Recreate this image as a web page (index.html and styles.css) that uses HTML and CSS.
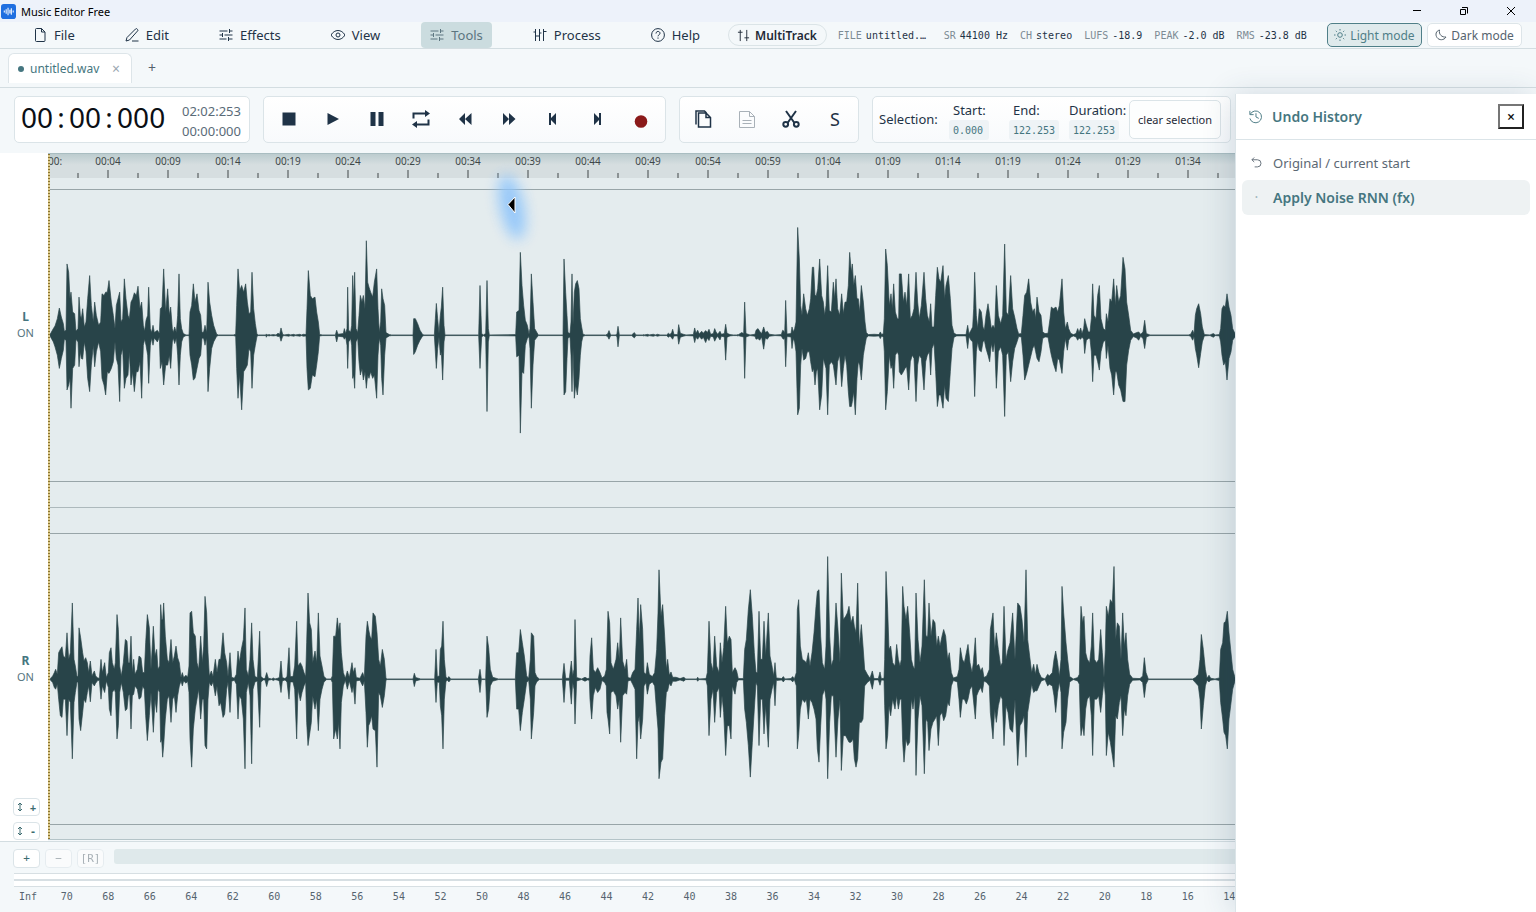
FILE: index.html
```html
<!DOCTYPE html>
<html lang="en">
<head>
<meta charset="utf-8">
<title>Music Editor Free</title>
<link rel="stylesheet" href="styles.css">
</head>
<body>
<div class="app">
  <header class="titlebar">
    <svg class="logo" viewBox="0 0 16 16"><rect width="16" height="16" rx="3" fill="#1f6fe0"/><path d="M3.500 7v2M5.500 5.500v5M7.500 4v8M9.500 6v4M11 4.500v7M13 7v2" stroke="#fff" stroke-width="1.100"/></svg>
    <span class="app-name">Music Editor Free</span>
    <div class="window-controls">
      <button aria-label="Minimize"><svg viewBox="0 0 10 10"><path d="M1 4.500h8"/></svg></button>
      <button aria-label="Restore"><svg viewBox="0 0 10 10"><path d="M1.500 8.500V3.500h5v5zM3 1.500h5.500v6"/></svg></button>
      <button aria-label="Close"><svg viewBox="0 0 10 10"><path d="M1 1l8 8M9 1l-8 8"/></svg></button>
    </div>
  </header>

  <nav class="menubar">
    <div class="menu">
      <button class="menu-item"><svg viewBox="0 0 14 14"><path d="M2.500 1.500a1 1 0 0 1 1-1H8.500L12 4v8.500a1 1 0 0 1-1 1H3.500a1 1 0 0 1-1-1zM8.500.500V4H12"/></svg>File</button>
      <button class="menu-item"><svg viewBox="0 0 14 14"><path d="M1 13l1-3.500L10.500 1a1 1 0 0 1 1.600 0l.400.400a1 1 0 0 1 0 1.600L4.500 12zM7 13h6.500"/></svg>Edit</button>
      <button class="menu-item"><svg viewBox="0 0 14 14"><path d="M.500 3h8M10.500 3h3M.500 7h3M5.500 7h8M.500 11h7M9.500 11h4M10.500 1v4M3.500 5v4M9.500 9v4"/></svg>Effects</button>
      <button class="menu-item"><svg viewBox="0 0 14 14"><path d="M0 7c3.500-6 10.500-6 14 0-3.500 6-10.500 6-14 0z"/><circle cx="7" cy="7" r="2"/></svg>View</button>
      <button class="menu-item active"><svg viewBox="0 0 14 14"><path d="M.500 3h8M10.500 3h3M.500 7h3M5.500 7h8M.500 11h7M9.500 11h4M10.500 1v4M3.500 5v4M9.500 9v4"/></svg>Tools</button>
      <button class="menu-item"><svg viewBox="0 0 14 14"><path d="M2.500 1v12M6.500 1v12M10.500 1v12M2.500 8h4M6.500 5h2M10.500 3.500h3M.500 4h2"/></svg>Process</button>
      <button class="menu-item"><svg viewBox="0 0 14 14"><circle cx="7" cy="7" r="6.400"/><path d="M5 5.500c0-2.800 4-2.600 4-.200 0 1.500-2 1.500-2 3M7 9.500v1.200"/></svg>Help</button>
    </div>
    <button class="multitrack"><svg viewBox="0 0 14 14"><path d="M3.500 1v12M1 3.500h5M10.500 1v12M8 9.500h5"/></svg>MultiTrack</button>
    <dl class="status">
      <div class="status-file"><dt>FILE</dt><dd>untitled.…</dd></div>
      <div><dt>SR</dt><dd>44100 Hz</dd></div>
      <div><dt>CH</dt><dd>stereo</dd></div>
      <div><dt>LUFS</dt><dd>-18.9</dd></div>
      <div><dt>PEAK</dt><dd>-2.0 dB</dd></div>
      <div><dt>RMS</dt><dd>-23.8 dB</dd></div>
    </dl>
    <div class="modes">
      <button class="mode selected"><svg viewBox="0 0 12 12"><circle cx="6" cy="6" r="2.300"/><path d="M6 0v1.500M6 10.500V12M0 6h1.500M10.500 6H12M1.800 1.800l1 1M9.200 9.200l1 1M1.800 10.200l1-1M9.200 2.800l1-1"/></svg>Light mode</button>
      <button class="mode"><svg viewBox="0 0 12 12"><path d="M4.500 1C1 2 0 5.500 2 8.500s7 3 9-.500C7 8.500 3.500 5.500 4.500 1z"/></svg>Dark mode</button>
    </div>
  </nav>

  <div class="tabs">
    <div class="tab"><i class="dot"></i><span>untitled.wav</span><button class="tab-close" aria-label="Close tab">×</button></div>
    <button class="tab-add" aria-label="New tab">+</button>
  </div>

  <div class="body">
    <main class="editor">
      <div class="toolbar">
        <section class="card clock">
          <div class="clock-main"><span>00</span><b>:</b><span>00</span><b>:</b><span>000</span></div>
          <div class="clock-side"><span>02:02:253</span><span>00:00:000</span></div>
        </section>
        <section class="card transport">
          <button class="tool" aria-label="Stop"><svg viewBox="0 0 20 20"><path d="M3.500 3.500h13v13h-13z"/></svg></button>
          <button class="tool" aria-label="Play"><svg viewBox="0 0 20 20"><path d="M4.500 4l11.500 6-11.500 6z"/></svg></button>
          <button class="tool" aria-label="Pause"><svg viewBox="0 0 20 20"><path d="M3.500 3h5v14h-5zM11.500 3h5v14h-5z"/></svg></button>
          <button class="tool" aria-label="Loop"><svg viewBox="0 0 20 20"><path d="M2.500 9.500v-5h13M17.500 10.500v5h-13" fill="none" stroke="currentColor" stroke-width="2"/><path d="M14 1l5 3.500-5 3.500zM6 12l-5 3.500L6 19z"/></svg></button>
          <button class="tool" aria-label="Rewind"><svg viewBox="0 0 20 20"><path d="M10 4v12L4 10zM16.500 4v12L10 10z"/></svg></button>
          <button class="tool" aria-label="Forward"><svg viewBox="0 0 20 20"><path d="M4 4v12l6-6zM10 4v12l6.500-6z"/></svg></button>
          <button class="tool" aria-label="To start"><svg viewBox="0 0 20 20"><path d="M6 4h2v5l5-5v12l-5-5v5H6z"/></svg></button>
          <button class="tool" aria-label="To end"><svg viewBox="0 0 20 20"><path d="M14 4h-2v5L7 4v12l5-5v5h2z"/></svg></button>
          <button class="tool" aria-label="Record"><svg viewBox="0 0 20 20"><circle cx="10" cy="12.500" r="6.300" fill="#8b1a1a"/></svg></button>
        </section>
        <section class="card clip">
          <button class="tool" aria-label="Copy"><svg class="line" viewBox="0 0 20 20"><path d="M5.500 4h7.500l4.500 4.500V18h-12zM13 4v4.500h4.500M3 15.500V2h8.500l2 2"/></svg></button>
          <button class="tool muted" aria-label="Paste"><svg class="thin" viewBox="0 0 20 20"><path d="M2.500 2.500h10l5 5v11h-15zM12.500 2.500v5h5M5.500 11.500h9M5.500 14.500h9"/></svg></button>
          <button class="tool" aria-label="Cut"><svg class="line bold" viewBox="0 0 20 20"><path d="M5 2l8.500 12M15 2L6.500 14"/><circle cx="4.700" cy="15.300" r="2.400"/><circle cx="15.300" cy="15.300" r="2.400"/></svg></button>
          <button class="tool letter">S</button>
        </section>
        <section class="card selection">
          <span class="selection-title">Selection:</span>
          <div class="field"><label for="start">Start:</label><input id="start" class="short" value="0.000"></div>
          <div class="field"><label for="end">End:</label><input id="end" value="122.253"></div>
          <div class="field"><label for="dur">Duration:</label><input id="dur" value="122.253"></div>
          <button class="clear">clear selection</button>
        </section>
      </div>

      <div class="stage">
        <aside class="channels">
          <div class="channel"><b>L</b><span>ON</span></div>
          <div class="channel"><b>R</b><span>ON</span></div>
          <div class="vzoom">
            <button aria-label="Zoom in vertically"><svg viewBox="0 0 6 10"><path d="M1 3l2-2 2 2M3 1v8M1 7l2 2 2-2"/></svg><b>+</b></button>
            <button aria-label="Zoom out vertically"><svg viewBox="0 0 6 10"><path d="M1 3l2-2 2 2M3 1v8M1 7l2 2 2-2"/></svg><b>-</b></button>
          </div>
        </aside>
        <div class="waves">
          <div class="ruler"><span class="first">00:</span><span>00:04</span><span>00:09</span><span>00:14</span><span>00:19</span><span>00:24</span><span>00:29</span><span>00:34</span><span>00:39</span><span>00:44</span><span>00:49</span><span>00:54</span><span>00:59</span><span>01:04</span><span>01:09</span><span>01:14</span><span>01:19</span><span>01:24</span><span>01:29</span><span>01:34</span></div>
          <div class="track left"><svg viewBox="0 -438 3561 876" preserveAspectRatio="none"><path id="wave-l"/></svg></div>
          <div class="track right"><svg viewBox="0 -438 3561 876" preserveAspectRatio="none"><path id="wave-r"/></svg></div>
          <div class="glow"></div>
          <svg class="pointer" viewBox="0 0 10 18"><path d="M8 1v16L1 8.500z" fill="#000" stroke="#fff"/></svg>
        </div>
      </div>

      <div class="zoombar">
        <button class="zoom">+</button>
        <button class="zoom" disabled>−</button>
        <button class="zoom reset" disabled>[R]</button>
        <div class="scroll"></div>
      </div>
      <div class="meter"><div class="meter-line"></div></div>
      <div class="scale"><span class="inf">Inf</span><div class="marks"><span>70</span><span>68</span><span>66</span><span>64</span><span>62</span><span>60</span><span>58</span><span>56</span><span>54</span><span>52</span><span>50</span><span>48</span><span>46</span><span>44</span><span>42</span><span>40</span><span>38</span><span>36</span><span>34</span><span>32</span><span>30</span><span>28</span><span>26</span><span>24</span><span>22</span><span>20</span><span>18</span><span>16</span><span>14</span></div></div>
    </main>

    <aside class="history">
      <header>
        <svg viewBox="0 0 16 16"><path d="M2 2v4h4M2.500 5.500a6.300 6.300 0 1 1-.500 4.500M8.500 4.500v4l3 1.500"/></svg>
        <h2>Undo History</h2>
        <button class="history-close" aria-label="Close">×</button>
      </header>
      <ul>
        <li><svg viewBox="0 0 12 12"><path d="M3.500.500L1 3l2.500 2.500M1 3h6a3.800 3.800 0 0 1 0 7.800H4"/></svg>Original / current start</li>
        <li class="current"><span class="bullet">·</span>Apply Noise RNN (fx)</li>
      </ul>
    </aside>
  </div>
</div>
<script src="waves.js"></script>
</body>
</html>
```
FILE: styles.css
```css
* { box-sizing: border-box; }
body { margin: 0; font-family: "Noto Sans", sans-serif; font-size: 13px; color: #1f3347; background: #f4f8fa; }
button { font: inherit; color: inherit; background: none; border: 0; padding: 0; margin: 0; }
svg { fill: none; stroke: currentColor; flex: none; }
.app { min-height: 100vh; display: flex; flex-direction: column; overflow: hidden; }

.titlebar { height: 22px; display: flex; align-items: center; gap: 5px; padding: 0 2px 0 1px; background: #edf2fa; color: #000; font-size: 11px; }
.logo { width: 15px; height: 15px; stroke: none; }
.window-controls { margin-left: auto; display: flex; }
.window-controls button { width: 47px; height: 20px; display: flex; align-items: center; justify-content: center; }
.window-controls svg { width: 10px; height: 10px; }

.menubar { height: 27px; display: flex; align-items: center; border-bottom: 1px solid #d3dde1; padding: 0 14px 0 24px; }
.menu { display: flex; gap: 32px; width: 704px; }
.menu-item { height: 26px; padding: 0 9px; display: flex; align-items: center; gap: 7px; border-radius: 4px; }
.menu-item svg { width: 14px; height: 14px; }
.menu-item.active { background: #cbdcdf; color: #5c7580; }
.multitrack { height: 22px; padding: 0 9px 0 8px; display: flex; align-items: center; gap: 5px; border: 1px solid #dbe4e7; border-radius: 11px; font-weight: 600; font-size: 12px; color: #1f2a37; }
.multitrack svg { width: 13px; height: 13px; }
.status { margin: 0 0 0 11px; display: flex; gap: 12px; font-family: "DejaVu Sans Mono", monospace; font-size: 10px; white-space: nowrap; }
.status div { display: flex; gap: 4px; }
.status-file { width: 94px; }
.status dt { color: #7d8b94; }
.status dd { margin: 0; color: #1f3347; }
.modes { margin-left: auto; display: flex; gap: 5px; }
.mode { height: 24px; width: 95px; display: flex; align-items: center; justify-content: center; gap: 4px; border: 1px solid #dde5e9; border-radius: 5px; background: #fff; color: #56646f; font-size: 12px; white-space: nowrap; }
.mode.selected { background: #dfeaec; border-color: #4f7f88; color: #4f7f88; }
.mode svg { width: 12px; height: 12px; }

.tabs { height: 39px; display: flex; align-items: flex-end; border-bottom: 1px solid #d3dde1; padding: 0 8px 4px; }
.tab { height: 30px; width: 124px; padding: 0 11px 0 9px; display: flex; align-items: center; background: #fff; border: 1px solid #dde5e9; border-bottom: 0; border-radius: 6px 6px 0 0; color: #457680; font-size: 12px; }
.dot { width: 6px; height: 6px; border-radius: 50%; background: #457680; margin-right: 6px; }
.tab-close { margin-left: auto; color: #9aa7b0; font-size: 14px; }
.tab-add { width: 40px; height: 32px; font-size: 14px; color: #54626d; }

.body { flex: 1; display: flex; }
.editor { flex: 1; min-width: 0; display: flex; flex-direction: column; }
.toolbar { display: flex; gap: 13px; padding: 8px 4px 10px 14px; }
.card { height: 47px; display: flex; align-items: center; border: 1px solid #dbe4e8; border-radius: 5px; background: linear-gradient(#fff, #f8fafc); }
.clock { width: 237px; padding: 0 8px 0 6px; justify-content: space-between; background: #fff; }
.clock-main { display: flex; font-size: 28px; line-height: 40px; padding-bottom: 5px; color: #0b0f14; }
.clock-main b { width: 16px; text-align: center; font-weight: 400; }
.clock-side { display: flex; flex-direction: column; font-size: 13px; line-height: 20px; color: #5a6b78; padding-top: 3px; }
.transport { padding: 0 2px 0 3px; }
.clip { padding: 0 1px; }
.tool { width: 44px; height: 44px; padding-bottom: 2px; display: flex; align-items: center; justify-content: center; color: #1f3347; }
.tool svg { width: 20px; height: 20px; fill: currentColor; stroke: none; }
.tool svg.line { fill: none; stroke: currentColor; stroke-width: 1.500; }
.tool svg.bold { stroke-width: 2; }
.tool svg.thin { fill: none; stroke: currentColor; stroke-width: 1; }
.muted { color: #a9b1b8; }
.letter { font-size: 18px; }
.selection { flex: 1; padding: 0 9px 0 6px; white-space: nowrap; }
.selection-title { width: 70px; padding-bottom: 2px; }
.field { width: 60px; display: flex; flex-direction: column; padding-top: 3px; }
.field label { line-height: 16px; padding-left: 4px; }
.field:nth-of-type(3) label { padding-left: 0; }
.field input { width: 50px; height: 20px; margin-top: 2px; padding: 0 4px; border: 0; border-radius: 3px; background: #eef3f6; color: #457680; font: 10px "DejaVu Sans Mono", monospace; }
.field input.short { width: 40px; }
.clear { margin-left: auto; width: 92px; height: 39px; border: 1px solid #dbe4e8; border-radius: 5px; font-size: 11px; color: #1f2a37; background: #fdfefe; }

.stage { flex: 1; display: flex; border-bottom: 1px solid #d3dde1; }
.channels { position: relative; width: 48px; background: #fff; display: flex; flex-direction: column; }
.channel { flex: 1; display: flex; flex-direction: column; align-items: center; justify-content: center; padding-left: 3px; color: #457680; line-height: 16px; font-size: 12px; }
.channel span { font-size: 11px; color: #567480; }
.vzoom { position: absolute; left: 13px; bottom: 1px; display: flex; flex-direction: column; gap: 6px; }
.vzoom button { width: 27px; height: 18px; padding: 0 3px; display: flex; align-items: center; justify-content: space-between; border: 1px solid #dbe4e8; border-radius: 4px; background: #fff; color: #3c6b70; font: 10px "DejaVu Sans Mono", monospace; }
.vzoom svg { width: 6px; height: 10px; }
.waves { position: relative; flex: 1; min-width: 0; overflow: hidden; display: flex; flex-direction: column; background: #e4ecee; border-top: 1px solid #a9bdc1; border-bottom: 1px solid #b4c4c8; margin-bottom: 1px; }
.waves::before { content: ""; position: absolute; z-index: 1; left: 0; top: 0; bottom: 0; width: 2px; background: repeating-linear-gradient(#8a7430 0 1px, #dcc98a 1px 3px); }
.ruler { position: relative; height: 24px; display: flex; font: 10px/15px "Noto Sans", sans-serif; color: #3f4849; background: linear-gradient(#bccccf, #d6dee0 45%); }
.ruler::before, .ruler::after { content: ""; position: absolute; left: 0; right: 0; bottom: 0; }
.ruler::before { height: 8px; background: repeating-linear-gradient(90deg, #8b9294 0 1px, transparent 1px 59px, #8b9294 59px 60px); }
.ruler::after { height: 5px; background: repeating-linear-gradient(90deg, #8b9294 0 1px, transparent 1px 29px, #8b9294 29px 30px); }
.ruler span { flex: none; width: 60px; text-align: center; }
.ruler .first { width: 30px; text-align: left; }
.track { flex: 1; display: flex; flex-direction: column; min-height: 200px; }
.track svg { flex: 1 0 auto; width: 100%; height: 0; border-top: 1px solid #98a5a8; border-bottom: 1px solid #98a5a8; fill: #284449; stroke: #284449; stroke-width: 2; }
.left { padding: 11px 0 25px; border-bottom: 1px solid #adb9bc; }
.right { padding: 25px 0 14px; }
.glow { position: absolute; left: 452px; top: 20px; width: 24px; height: 66px; border-radius: 50%; background: #8fc5fb; filter: blur(7px); transform: rotate(-12deg); opacity: .9; }
.pointer { position: absolute; left: 459px; top: 42px; width: 10px; height: 18px; }

.zoombar { height: 31px; display: flex; align-items: center; gap: 5px; padding-left: 13px; }
.zoom { width: 27px; height: 19px; margin-top: 2px; border: 1px solid #dbe4e8; border-radius: 4px; background: #fff; color: #3c6b70; font: 11px/15px "DejaVu Sans Mono", monospace; }
.zoom:disabled { opacity: .55; color: #6b7780; }
.scroll { flex: 1; height: 15px; margin: 0 0 3px 5px; border-radius: 3px 0 0 3px; background: #dfe9eb; }
.meter { margin-left: 14px; height: 14px; border-top: 1px solid #d7dfe3; border-bottom: 1px solid #d7dfe3; background: #fff; padding-top: 5px; }
.meter-line { height: 2px; background: #d7dfe3; }
.scale { height: 25px; display: flex; overflow: hidden; padding-left: 14px; font: 10px/20px "DejaVu Sans Mono", monospace; color: #56646f; }
.inf { width: 32px; padding-left: 5px; }
.marks { flex: 1; display: flex; margin-right: -15px; }
.marks span { flex: 1; min-width: 0; text-align: center; }

.history { position: relative; z-index: 2; width: 301px; margin-top: 6px; background: #fff; border-left: 1px solid #dbe4e8; box-shadow: -4px 0 28px rgba(40, 70, 100, .16); }
.history header { height: 46px; display: flex; align-items: center; padding: 0 12px; border-bottom: 1px solid #dbe4e8; color: #457680; }
.history header svg { width: 15px; height: 15px; }
.history h2 { margin: 0 0 0 9px; font-size: 14px; font-weight: 600; }
.history-close { margin-left: auto; width: 26px; height: 25px; border: 2px outset #767676; font-size: 14px; line-height: 18px; color: #111; font-weight: 600; }
.history ul { list-style: none; margin: 0; padding: 5px 6px; }
.history li { height: 35px; display: flex; align-items: center; gap: 11px; padding-left: 9px; border-radius: 6px; color: #5c6873; }
.history li svg, .bullet { width: 11px; height: 11px; }
.bullet { line-height: 9px; text-align: center; font-weight: 400; color: #9fb6bc; }
.history li.current { background: #eef2f3; color: #457680; font-size: 14px; font-weight: 600; }
```
FILE: waves.js
```js
// Envelope peaks as "x up down" groups; "down" may be left out when it equals "up".
const left = [
  [0, "150 2;160 20;165 28 35;172 50 60;178 82 100;184 55 70;190 35 45;193 12;198 15;201 215 165;206 190 150;210 110 130;213 130 220;218 70 100;224 65 90;228 12;234 20;237 115 95;241 60 50;244 50 70;248 80 72;253 25 20;258 40 50;263 110 130;269 180 170;274 90;280 40 30;284 100 95;289 60 50;296 30 20;302 40 50;306 125 130;312 120 150;317 130 180;322 130 110;327 165 115;334 100;340 60 80;345 20;349 90 70;354 110 90;359 130 200;363 40 60;368 50 40;373 170 160;378 110 130;384 60 120;388 50;393 100 150;398 110;403 128 170;409 120 110;414 148 110;420 80;425 100 190;430 30;434 12;438 45 30;443 60;446 145;451 20 30;455 8;459 30;463 8;472 15 20;478 6;481 80 100;486 85 80;491 200 150;497 70 90;503 140 90;508 60;512 85 100;517 20;520 8;524 25;529 8;533 60;537 185 150;541 50 60;545 20;550 5;558 1;567 1;570 70 60;575 90;580 155 135;585 100 130;591 125 100;597 75 70;602 60;606 8;611 10;615 30;620 8;624 160 170;629 100;635 60 40;641 30 20;650 3;655 1;700 1;707 3;710 90 100;714 200 190;719 135 120;725 150 225;731 130 110;737 155 100;742 100 90;747 65 40;752 70 50;756 190 160;761 80 60;766 35 30;771 3;775 1;798 1;799 4 6;801 1;808 2;812 1;820 2;828 1;834 6 4;839 3;843 22 18;848 3;852 1;867 3;870 1;882 3;885 1;900 3;904 1;910 3;918 2;921 80 100;925 195 165;931 120 160;937 110 120;945 115 125;950 70 90;955 40 50;959 2;968 1;1006 1;1010 15 20;1014 3;1030 5;1033 20 12;1037 5;1041 20 30;1043 145 100;1046 15 20;1052 10;1055 30;1058 180 130;1061 100 120;1064 190 160;1068 20;1073 8;1077 60 80;1081 120;1086 100;1090 120 135;1095 80 110;1099 285 160;1103 160 120;1107 145 130;1112 130 110;1118 115 130;1123 160 120;1130 200 190;1134 80 60;1138 8;1142 40 30;1145 140 130;1149 110 180;1154 90 60;1158 8;1168 2;1175 1"],
  [1200, "39 1;41 50 58;46 50;53 35 30;60 15;68 2;72 1;103 1;106 50;109 96 100;113 50 40;117 5;121 60;124 85 50;128 145 135;132 30 20;135 1;236 1;240 150 100;245 5;250 1;257 5;261 165 230;265 20;268 1;347 2;350 70 65;357 75 60;361 250 295;366 150 110;371 90 115;376 45 30;382 30 10;387 4;390 20 40;394 185 220;399 100 90;404 20 15;415 1;489 1;492 230 180;497 130 170;501 60 70;504 8;510 5;513 40 60;516 185 170;519 30 40;523 130 190;527 155 150;532 165 180;537 140 130;541 50 60;545 25 20;549 3;556 1;617 1;623 4;627 14 12;631 3;634 1;648 1;651 5;654 27 35;658 1;695 1;703 8;708 1;728 1;730 2;732 1;744 3;747 1;760 3;766 1;773 3;780 1;800 1;805 6;810 2;815 8;818 18 12;822 2;833 2;836 32 27;841 6;850 3;858 1;880 2;884 22;888 6;893 15 12;898 4;905 12;910 6;917 14 22;922 8;927 18 16;932 3;940 5;944 20 18;948 10;953 3;960 12 14;964 3;973 5;977 33 75;981 6;990 2;1000 1;1010 1;1012 2;1014 1;1025 8 4;1031 5;1034 100 130;1038 5;1050 1;1065 3;1068 15 12;1074 20 10;1079 12 15;1085 5;1091 25 42;1096 8;1102 12;1108 3;1125 1"],
  [2340, "4 2;8 15 10;12 12;14 5;17 105 95;21 4;33 5;36 25 40;40 10;44 20;48 40 50;53 325 240;58 230 220;62 90;66 60 40;71 125 75;77 80 70;82 60 50;88 80 50;92 110 80;97 205 110;101 205 100;105 120 150;109 120 110;113 140 100;119 230 225;125 120 180;130 100 70;134 60 85;138 90 100;143 210 240;148 75 90;154 70 80;160 160 90;164 110 120;168 170 150;173 80;179 60;185 125 155;190 65 100;195 100 60;200 100 90;205 150 170;209 250 215;214 190 215;217 215 200;221 150 170;226 180 240;231 110 130;235 110 80;239 70 90;244 150 135;250 100 60;255 40 30;259 8;265 2;283 3;297 2;301 10;305 2;310 5;313 50;317 260 225;322 210 170;328 90 60;333 125 100;337 80 90;341 155 160;346 70 60;352 50;356 50 60;358 185 110;364 185 120;370 100 110;375 130 100;380 90 95;386 185 165;391 50 80;397 60;402 80 70;408 190 200;413 100 90;418 50 60;424 90 70;432 190 165;437 110 80;442 60;448 40 50;452 95 120;456 25 40;462 25;467 120 110;472 205 215;477 170 180;482 160 180;489 210 220;494 110 150;498 150 190;505 180 200;511 110;516 30 40;522 6;530 2;550 2;558 2;563 30 40;567 4;573 15;578 25 20;581 80 90;584 190 185;589 60 50;593 20;598 80 45;604 70 50;609 25 20;613 15;618 60 40;624 95 60;629 60 80;634 20 25;639 30 50;644 20;649 150 160;655 60 50;662 35;668 60;674 275 245;679 70 60;685 60 50;692 180 140;698 80;704 55 40;711 20;716 4;724 5;729 60;734 120 135;740 130 115;746 170 90;752 100 65;758 70 40;763 80 30;767 50;771 115 70;777 70 80;783 60 50;788 10;795 5;804 6;810 50 40;814 85 60;820 80 85;828 85 110;833 70;838 90 75;846 170 115;851 70 50;856 20 10;862 40 45;866 20 15;872 6;880 2;888 5;893 20 15;897 8;902 22 12;906 5;911 20 12;914 50 55;919 30 15;925 10;930 10;934 50;938 155 140;942 60;948 50 60;953 120 80;958 150 105;963 50;970 20;976 15;979 65 70;984 40 30;990 110 100;995 100 120;1001 170 180;1006 90 110;1010 150 110;1016 100 150;1022 120 165;1029 235 200;1035 200;1040 100 90;1046 60 45;1052 15;1060 4;1070 8;1076 10 15;1082 3;1089 10;1094 45 40;1099 5;1110 1;1225 1;1232 3;1238 15;1242 4;1246 60 40;1250 80 60;1256 95 98;1262 65 55;1267 25 20;1273 2;1290 1;1300 5 6;1306 1;1318 2;1322 20;1326 80 60;1331 90;1336 85 80;1341 125 135;1347 85 70;1353 60 50;1358 20 15;1365 5"]
];
const right = [
  [0, "150 1;158 10;163 20 25;167 30;172 15;176 80 60;181 90 110;186 98 115;190 70 60;196 65 60;201 140 170;206 60;211 80 70;217 230 240;222 60 70;226 40;231 8;234 8;237 155 120;242 125 155;248 80 100;252 55 60;257 65 70;262 50 40;266 20;271 55 68;276 10;283 25 20;287 10 12;293 4;298 3;303 60;307 20;314 50 40;319 5;325 20 25;328 80 90;333 95 110;337 50 40;343 30;346 50 40;351 195 180;355 150 140;359 40;364 10;370 50 40;376 120 95;381 115 90;385 50;389 50 45;393 130 150;397 20 50;401 60 45;405 15 20;412 30;417 70 60;423 65 55;428 20;433 20 30;437 110;442 195 185;448 155 110;453 30 40;460 160;465 70 60;470 90 100;474 30;479 40;482 225 190;485 180;488 180 235;491 230 200;496 130 120;502 60;507 50;513 120 130;518 50 60;523 70 50;528 100;533 65 50;538 50 20;543 5;547 20;551 5;558 12;563 6;567 40;570 200 180;575 205 265;580 140 150;586 130 90;591 50 60;596 30;602 130 120;607 50 60;611 100 60;615 250 200;620 200 210;624 80 60;628 10;634 25 20;639 8;646 60 50;651 20;657 60 80;662 60 70;669 140 115;674 80 105;680 50 30;684 8;690 80 100;695 6;703 3;709 15;714 85 120;718 50;724 90 60;730 120;735 215 270;739 30 40;745 10;750 60 50;755 170 255;759 60 30;765 8;772 5;779 145;783 8;790 2;795 2;800 20 22;805 3;815 1;820 4;825 1;833 3;838 5;843 55 40;847 5;855 2;861 8;867 95 60;871 8;879 8;884 40 30;890 175 180;894 40 30;901 50 65;906 40;912 20;917 8;920 110 130;924 260 200;929 170 165;934 150 130;938 50;945 85 90;950 50 60;955 200 155;960 70 60;966 40 30;972 8;980 1;993 1;997 10;1001 130 180;1007 130 150;1012 185 180;1016 145 130;1020 170 210;1024 80 70;1030 20;1036 3;1042 25 30;1048 5;1056 50 40;1060 20;1065 35 75;1069 5;1080 3;1088 20;1093 5;1098 130 100;1102 175 205;1106 150 140;1110 130;1115 120 110;1119 200 150;1126 190 155;1131 140 265;1136 60 40;1141 40 50;1147 90 85;1153 60 50;1158 2;1162 1"],
  [1200, "39 1;43 18 22;47 5;55 3;62 1;104 1;108 90 70;112 8;118 10;121 90 80;125 100 110;129 175 210;133 60;138 6;142 3;147 8;152 1;235 1;240 30 40;244 1;257 1;261 130 115;266 95 90;271 30 20;278 6;295 1;346 1;350 80 90;356 80 90;361 150 155;367 110 100;373 70 60;380 10;386 3;391 60;394 140 180;401 130 100;405 20;410 8;418 1;487 1;492 48 70;497 3;508 3;514 55 75;518 10;522 30;525 180 135;530 5;545 1;555 6;562 2;568 3;570 70 60;575 125 120;580 30 50;586 20 25;593 35 40;600 20 30;606 4;614 10;619 30 20;621 110 100;624 205 120;629 170 165;633 50 40;640 30 35;648 60 50;653 110 90;658 60;662 185 190;668 55 50;675 30 40;680 60 45;684 5;692 3;698 20 15;705 30;710 150 240;714 245 130;718 120 110;722 225 180;728 150 120;732 20;738 15 10;742 50 45;748 15;757 8;764 20;770 90 100;774 200 150;777 330 300;783 190 250;788 225 240;794 130 110;799 30 40;803 60 35;808 12;813 22 20;818 6;828 6;840 2;852 6;857 1;890 1;893 6;897 1;918 2;922 20;927 175 170;933 50 60;939 25 30;944 130;950 40;957 20 25;961 110 115;966 50;971 95 100;977 220 230;982 110 140;988 130 140;993 120 180;997 20;1005 35 45;1010 25 10;1015 2;1030 2;1034 90;1039 120 130;1045 210 200;1051 270 295;1057 190;1063 80 90;1068 20 10;1072 20;1077 205 200;1082 60;1087 60;1092 175 165;1097 70 80;1105 200 205;1110 70 60;1116 40 30;1121 10;1125 50 80;1129 4;1145 2;1150 8;1155 1"],
  [2340, "33 2;38 8;43 1;49 20;52 210;56 240 170;61 100 90;67 60;74 55 70;79 50 60;85 80 120;90 40 60;96 80 70;102 140 90;108 220 120;112 265 210;117 270 250;122 130 140;127 50;134 30;138 100 60;143 370 300;149 130;154 40 50;160 60 50;168 230 235;174 150 120;180 50 60;184 320 275;190 180 170;197 190 170;202 200 180;207 220 190;213 170 190;219 190 180;223 160 240;228 140 265;233 290 240;238 100 130;244 165 130;249 100 120;254 30 20;262 15 10;270 3;277 25 30;282 2;295 2;300 22 18;304 2;312 3;314 60 80;318 325 210;323 210 170;327 90 80;332 100 110;338 50 60;345 40 90;350 105 50;355 60 90;360 40 60;364 60;368 280 190;372 220 250;378 180;383 220 200;389 140 190;394 60;399 40 90;404 30 50;408 260 290;414 120;420 50;426 100 80;433 300 285;438 130 120;443 130;447 230 215;453 130 150;459 180 130;465 170 120;470 100 110;475 130 200;480 100 110;486 130 100;491 150 125;497 130 110;503 60 70;508 80;514 20;520 4;532 8;537 30 60;541 95 115;547 60;553 50 60;559 80 75;564 105 60;570 50 30;576 20;580 50 60;586 125 120;590 40 50;596 45 35;602 25;607 35 40;612 5;620 10;628 30 20;631 150 100;639 200 180;644 90;649 140 130;655 90 80;662 40 50;667 50 60;672 220 200;678 60 80;684 90 100;690 110 150;698 200 160;705 60;713 230 260;720 220 140;726 180 130;732 110;738 330 235;743 120 100;749 70 60;755 20 15;761 45 40;766 15 35;771 45 35;777 20;784 5;795 1;803 15 20;808 10 15;817 20;822 60 50;827 85 100;833 50 40;838 8;843 60 40;846 280 210;851 200 160;858 110 130;863 60;869 8;880 1;893 5;898 15;901 150 130;903 220 170;908 170 140;912 190 170;917 80 90;922 60;929 50;934 100 110;938 200 230;943 60;950 50 60;956 60 50;962 150 100;967 80 50;972 5;976 90 50;979 220 230;985 190 160;991 240 190;997 230;1002 340 265;1007 120 110;1012 170 120;1018 160 70;1023 60 50;1028 200 170;1033 100 90;1038 140 110;1043 60 50;1049 15;1058 3;1080 2;1088 10;1093 65 55;1098 20 15;1105 1;1238 1;1246 5 10;1255 15 20;1260 60;1264 135 150;1270 90 80;1276 30 20;1281 3;1287 12 8;1292 3;1305 1;1318 4;1322 90 70;1328 110 120;1332 170 160;1337 175 170;1342 205 210;1347 140 120;1352 90 80;1358 30;1365 5"]
];

const origin = 144;

function envelope(parts) {
  const top = [];
  const bottom = [];
  for (const [offset, text] of parts) {
    for (const item of text.split(";")) {
      const [x, up, down = up] = item.split(" ").map(Number);
      top.push(`${x + offset - origin} ${-up}`);
      bottom.unshift(`${x + offset - origin} ${down}`);
    }
  }
  return `M0 0L${top.join("L")}L${bottom.join("L")}Z`;
}

document.getElementById("wave-l").setAttribute("d", envelope(left));
document.getElementById("wave-r").setAttribute("d", envelope(right));
```
